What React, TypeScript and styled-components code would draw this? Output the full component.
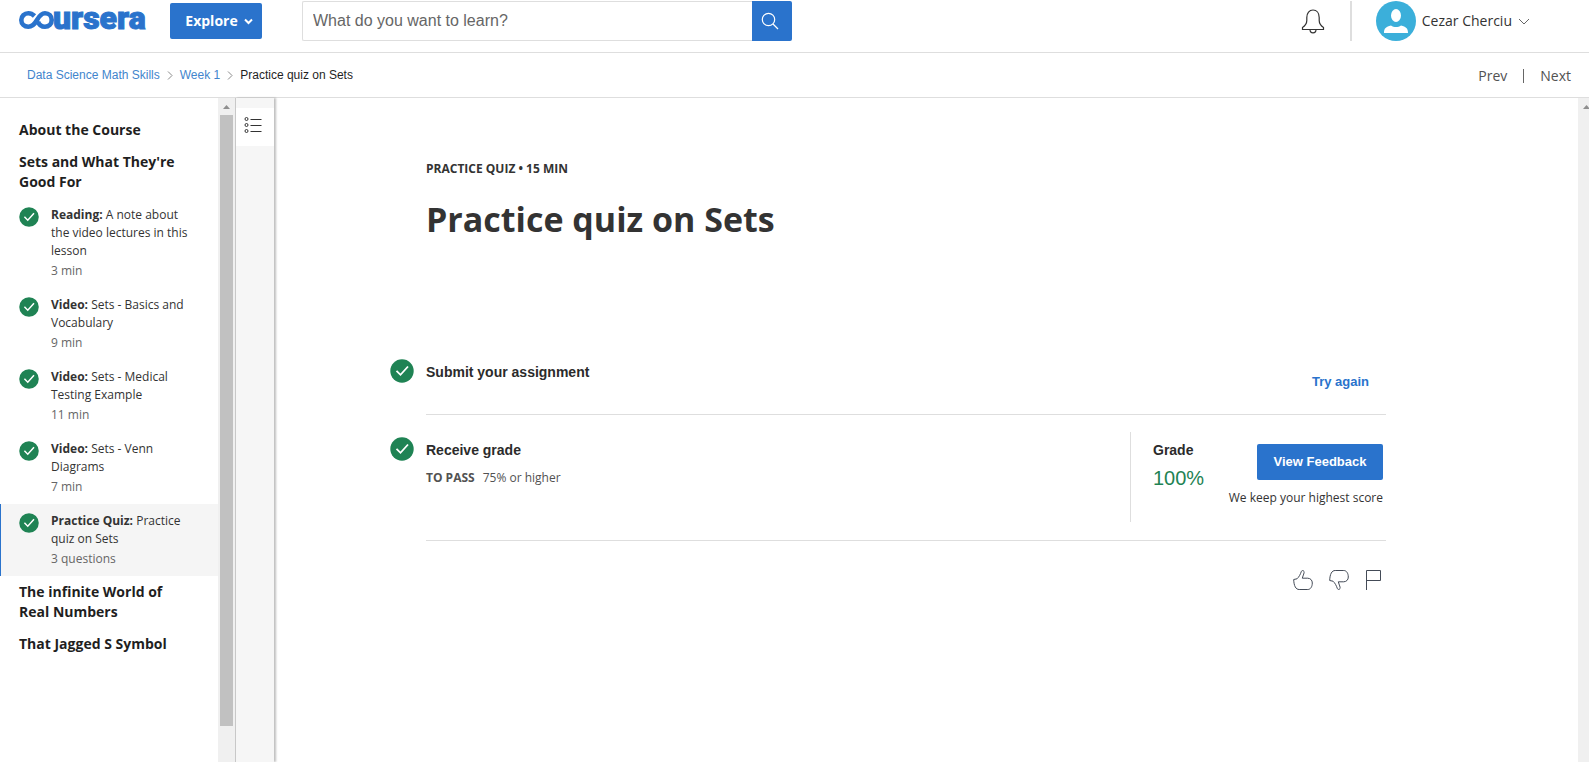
import React from "react";
import styled, { createGlobalStyle, css } from "styled-components";

const sans = `"Open Sans", "Noto Sans", sans-serif`;
const arial = `"Liberation Sans", Arial, sans-serif`;
const blue = "#2a73cc";
const line = "#dedede";

const GlobalStyle = createGlobalStyle`
  *, *::before, *::after { box-sizing: border-box; }
  body { margin: 0; background: #fff; color: #333; font-family: ${sans}; font-size: 12px; line-height: 18px; }
  h1, h2, h3, p, ul, ol { margin: 0; padding: 0; }
  ul, ol { list-style: none; }
  a { color: inherit; text-decoration: none; }
  button, input { font: inherit; border: 0; padding: 0; margin: 0; background: none; color: inherit; }
  button { cursor: pointer; }
  svg { display: block; flex: none; }
`;

const Page = styled.div`
  display: flex;
  flex-direction: column;
  height: 100vh;
  overflow: hidden;
`;

const Header = styled.header`
  display: flex;
  align-items: flex-start;
  padding: 1px 59px 11px 19px;
  border-bottom: 1px solid ${line};
`;

const Logo = styled.a`
  display: flex;
  align-items: center;
  height: 40px;
  width: 151px;
  padding-bottom: 2px;
  color: ${blue};
`;

const Wordmark = styled.span`
  margin: -4px 0 0 -1px;
  font: 900 32px/36px Roboto, ${arial};
  -webkit-text-stroke: 1px ${blue};
`;

const Explore = styled.button`
  display: flex;
  align-items: center;
  justify-content: center;
  gap: 6px;
  width: 92px;
  height: 36px;
  margin: 2px 40px 0 0;
  padding-left: 6px;
  border-radius: 2px;
  background: ${blue};
  color: #fff;
  font-size: 14px;
  font-weight: 700;
`;

const Search = styled.form`
  display: flex;
  flex: 0 1 490px;
  height: 40px;
`;

const SearchInput = styled.input`
  flex: 1;
  min-width: 0;
  padding: 0 10px;
  border: 1px solid ${line};
  border-right: 0;
  border-radius: 2px 0 0 2px;
  font: 16px/20px ${arial};
  &::placeholder { color: #666; opacity: 1; }
`;

const SearchButton = styled.button`
  display: grid;
  place-items: center;
  width: 40px;
  padding-right: 4px;
  border-radius: 0 2px 2px 0;
  background: ${blue};
`;

const Account = styled.div`
  display: flex;
  align-items: center;
  height: 40px;
  margin-left: auto;
`;

const Bell = styled.button`
  display: grid;
  margin-right: 25px;
`;

const AccountMenu = styled.button`
  display: flex;
  align-items: center;
  gap: 6px;
  height: 40px;
  padding-left: 24px;
  border-left: 2px solid ${line};
  font-size: 14px;
  line-height: 20px;
`;

const SubHeader = styled.nav`
  display: flex;
  align-items: center;
  justify-content: space-between;
  height: 45px;
  padding: 0 18px 0 27px;
  border-bottom: 1px solid ${line};
`;

const Crumbs = styled.ol`
  display: flex;
  align-items: center;
  gap: 7px;
  font-family: ${arial};
  color: #1f1f1f;
  a { color: #4285cd; }
  li { display: flex; align-items: center; gap: 7px; }
`;

const Pager = styled.div`
  display: flex;
  align-items: center;
  padding-top: 2px;
  font-size: 14px;
  line-height: 20px;
  color: #525252;
  a + a { margin-left: 16px; padding-left: 17px; background: linear-gradient(#666, #666) 0 3px / 1px 14px no-repeat; }
`;

const Body = styled.div`
  display: flex;
  flex: 1;
  min-height: 0;
`;

const Sidebar = styled.aside`
  flex: none;
  width: 218px;
  padding-top: 16px;
`;

const ModuleTitle = styled.h2`
  padding: 6px 30px 6px 19px;
  color: #1f1f1f;
  font-size: 14px;
  line-height: 20px;
  font-weight: 700;
`;

const Lesson = styled.a<{ $active?: boolean }>`
  display: flex;
  gap: 12px;
  padding: 8px 28px 8px 19px;
  ${(p) => p.$active && css`
    background: #f5f5f5;
    box-shadow: inset 1px 0 ${blue};
  `}
  svg { margin-top: 1px; }
`;

const LessonMeta = styled.span`
  display: block;
  margin-top: 2px;
  color: #666;
`;

const ScrollTrack = styled.div<{ $width: number }>`
  flex: none;
  width: ${(p) => p.$width}px;
  overflow: hidden;
  background: #f0f0f0;
`;

const ScrollArrow = styled.div`
  width: 17px;
  padding: 7px 0 6px 5px;
`;

const ScrollThumb = styled.div`
  width: 13px;
  height: 92%;
  margin-left: 2px;
  background: #c1c1c1;
`;

const Rail = styled.div`
  flex: none;
  width: 39px;
  padding-top: 10px;
  border-left: 1px solid #c8c8c8;
  background: #f6f6f6;
  box-shadow: 2px 0 2px rgba(0, 0, 0, 0.25);
`;

const RailButton = styled.button`
  display: grid;
  place-items: center;
  width: 38px;
  height: 38px;
  padding: 0 4px 4px 0;
  background: #fff;
`;

const Main = styled.main`
  flex: 1;
  min-width: 0;
  padding: 61px 40px 0 0;
`;

const Content = styled.div`
  width: 100%;
  max-width: 960px;
  margin: 0 auto;
`;

const Kicker = styled.p`
  font-weight: 700;
  line-height: 20px;
`;

const Title = styled.h1`
  margin: 16px 0 104px;
  font-size: 34px;
  line-height: 48px;
  font-weight: 700;
`;

const Step = styled.section`
  display: flex;
  border-bottom: 1px solid ${line};
`;

const StepBadge = styled.div<{ $top: number }>`
  width: 36px;
  margin: ${(p) => p.$top}px 0 0 -36px;
`;

const StepInfo = styled.div<{ $top: number }>`
  flex: 1;
  padding-top: ${(p) => p.$top}px;
`;

const StepTitle = styled.h3`
  color: #2b2b2b;
  font: 700 14px/20px ${arial};
`;

const Requirement = styled.p`
  display: flex;
  gap: 8px;
  margin-top: 9px;
  color: #525252;
  b { font-weight: 700; }
`;

const TryAgain = styled.button`
  margin: 25px 17px 22px 0;
  color: ${blue};
  font: 700 13px/20px ${arial};
`;

const GradePanel = styled.div`
  display: flex;
  justify-content: space-between;
  width: 256px;
  height: 90px;
  margin: 17px 0 18px;
  padding: 8px 3px 0 22px;
  border-left: 1px solid ${line};
`;

const Score = styled.p`
  margin-top: 5px;
  color: #1f8354;
  font: 20px/26px ${arial};
`;

const Feedback = styled.div`
  display: flex;
  flex-direction: column;
  align-items: flex-end;
  gap: 9px;
  padding-top: 4px;
`;

const FeedbackButton = styled.button`
  width: 126px;
  height: 36px;
  border-radius: 2px;
  background: ${blue};
  color: #fff;
  font: 700 13px/20px ${arial};
`;

const Reactions = styled.div`
  display: flex;
  justify-content: flex-end;
  gap: 16px;
  padding: 29px 3px 0 0;
  button { display: grid; }
`;

const Check = ({ size }: { size: number }) => (
  <svg width={size} height={size} viewBox="0 0 24 24" aria-label="Completed">
    <circle cx="12" cy="12" r="11.700" fill="#1f8354" />
    <path d="M6.500 11.800l4 4 7.500-8.300" fill="none" stroke="#fff" strokeWidth="1.800" />
  </svg>
);

const Arrow = () => (
  <svg width="7" height="4" viewBox="0 0 7 4"><path d="M0 4L3.500 0 7 4z" fill="#8f8f8f" /></svg>
);

const CrumbArrow = () => (
  <svg width="6" height="9" viewBox="0 0 6 9" fill="none" stroke="#8a8a8a"><path d="M1 .5l4 4-4 4" /></svg>
);

const Thumb = ({ down }: { down?: boolean }) => (
  <svg width="20" height="20" viewBox="0 0 20 20" fill="none" stroke="#444b57" strokeLinejoin="round">
    <path
      transform={down ? "matrix(1 0 0 -1 0 20)" : undefined}
      d="M.7 9.500L4 8.800C6 7 7.300 4.500 8.300 1.600 8.700.3 10.300.2 11 1.400c.6 1.200-.8 3.600-1.700 6.800h5.400c2.800.1 4.600 2 4.600 4.800 0 3.700-1.800 6.500-4.500 6.500H6.200C2.800 19.500.9 16 .7 9.500z"
    />
  </svg>
);

const lessons = [
  { kind: "Reading", name: "A note about the video lectures in this lesson", meta: "3 min" },
  { kind: "Video", name: "Sets - Basics and Vocabulary", meta: "9 min" },
  { kind: "Video", name: "Sets - Medical Testing Example", meta: "11 min" },
  { kind: "Video", name: "Sets - Venn Diagrams", meta: "7 min" },
  { kind: "Practice Quiz", name: "Practice quiz on Sets", meta: "3 questions", active: true },
];

export default function App() {
  return (
    <Page>
      <GlobalStyle />
      <Header>
        <Logo href="#" aria-label="Coursera">
          <svg width="35" height="18" viewBox="0 0 35 18" fill="none" stroke="currentColor" strokeWidth="4.600">
            <path d="M15.500 5C13.500 3 11.500 2.300 9.300 2.300 5.300 2.300 2.300 5.200 2.300 9s3 6.700 7 6.700c4.500 0 6.700-3.200 8.700-6.700s4-6.700 8-6.700S32.700 5.200 32.700 9s-2.900 6.700-6.700 6.700c-3.400 0-6-2-7-5" />
          </svg>
          <Wordmark>ursera</Wordmark>
        </Logo>
        <Explore>
          Explore
          <svg width="9" height="7" viewBox="0 0 9 7" fill="none" stroke="#fff" strokeWidth="2"><path d="M1 1.500L4.500 5 8 1.500" /></svg>
        </Explore>
        <Search>
          <SearchInput aria-label="Search" placeholder="What do you want to learn?" />
          <SearchButton type="button" aria-label="Submit search">
            <svg width="18" height="18" viewBox="0 0 18 18" fill="none" stroke="#fff" strokeWidth="1.200">
              <circle cx="7.500" cy="7.500" r="6.200" /><path d="M12 12l5 5" />
            </svg>
          </SearchButton>
        </Search>
        <Account>
          <Bell aria-label="Notifications">
            <svg width="24" height="26" viewBox="0 0 24 26" fill="none" stroke="#333" strokeWidth="1.200">
              <path d="M1.500 21.500v-2c3-2 4.300-4 4.300-7V9.500c0-4.500 2.500-7.500 6.200-7.500s6.200 3 6.200 7.500v3c0 3 1.300 5 4.300 7v2z" /><path d="M9 21.500c0 4.500 6 4.500 6 0" />
            </svg>
          </Bell>
          <AccountMenu>
            <svg width="40" height="40" viewBox="0 0 40 40">
              <circle cx="20" cy="20" r="20" fill="#3bafda" />
              <ellipse cx="20" cy="14.500" rx="5" ry="6.500" fill="#fff" />
              <path d="M8 32c0-5 2-6 7-7.500 3 2 7 2 10 0 5 1.500 7 2.500 7 7.500z" fill="#fff" />
            </svg>
            Cezar Cherciu
            <svg width="12" height="7" viewBox="0 0 12 7" fill="none" stroke="#666"><path d="M1 1l5 5 5-5" /></svg>
          </AccountMenu>
        </Account>
      </Header>
      <SubHeader aria-label="Breadcrumb">
        <Crumbs>
          <li><a href="#">Data Science Math Skills</a><CrumbArrow /></li>
          <li><a href="#">Week 1</a><CrumbArrow /></li>
          <li>Practice quiz on Sets</li>
        </Crumbs>
        <Pager><a href="#">Prev</a><a href="#">Next</a></Pager>
      </SubHeader>
      <Body>
        <Sidebar>
          <ModuleTitle>About the Course</ModuleTitle>
          <ModuleTitle>Sets and What They're Good For</ModuleTitle>
          <ul>
            {lessons.map((l) => (
              <li key={l.name}>
                <Lesson href="#" $active={l.active}>
                  <Check size={20} />
                  <span>
                    <b>{l.kind}:</b> {l.name}
                    <LessonMeta>{l.meta}</LessonMeta>
                  </span>
                </Lesson>
              </li>
            ))}
          </ul>
          <ModuleTitle>The infinite World of Real Numbers</ModuleTitle>
          <ModuleTitle>That Jagged S Symbol</ModuleTitle>
        </Sidebar>
        <ScrollTrack $width={17}>
          <ScrollArrow><Arrow /></ScrollArrow>
          <ScrollThumb />
        </ScrollTrack>
        <Rail>
          <RailButton aria-label="Course outline">
            <svg width="18" height="18" viewBox="0 0 18 18" fill="none" stroke="#333">
              <circle cx="2.500" cy="3" r="1.500" /><circle cx="2.500" cy="9" r="1.500" /><circle cx="2.500" cy="15" r="1.500" />
              <path d="M6.500 3.500h11M6.500 9.500h11M6.500 15.500h11" />
            </svg>
          </RailButton>
        </Rail>
        <Main>
          <Content>
            <Kicker>PRACTICE QUIZ • 15 MIN</Kicker>
            <Title>Practice quiz on Sets</Title>
            <Step>
              <StepBadge $top={12}><Check size={24} /></StepBadge>
              <StepInfo $top={15}><StepTitle>Submit your assignment</StepTitle></StepInfo>
              <TryAgain>Try again</TryAgain>
            </Step>
            <Step>
              <StepBadge $top={22}><Check size={24} /></StepBadge>
              <StepInfo $top={25}>
                <StepTitle>Receive grade</StepTitle>
                <Requirement><b>TO PASS</b> <span>75% or higher</span></Requirement>
              </StepInfo>
              <GradePanel>
                <div>
                  <StepTitle>Grade</StepTitle>
                  <Score>100%</Score>
                </div>
                <Feedback>
                  <FeedbackButton>View Feedback</FeedbackButton>
                  <span>We keep your highest score</span>
                </Feedback>
              </GradePanel>
            </Step>
            <Reactions>
              <button aria-label="Like"><Thumb /></button>
              <button aria-label="Dislike"><Thumb down /></button>
              <button aria-label="Report">
                <svg width="18" height="20" viewBox="0 0 18 20" fill="none" stroke="#444b57"><path d="M1.500 20V.5h14v10h-14" /></svg>
              </button>
            </Reactions>
          </Content>
        </Main>
        <ScrollTrack $width={11}><ScrollArrow><Arrow /></ScrollArrow></ScrollTrack>
      </Body>
    </Page>
  );
}
